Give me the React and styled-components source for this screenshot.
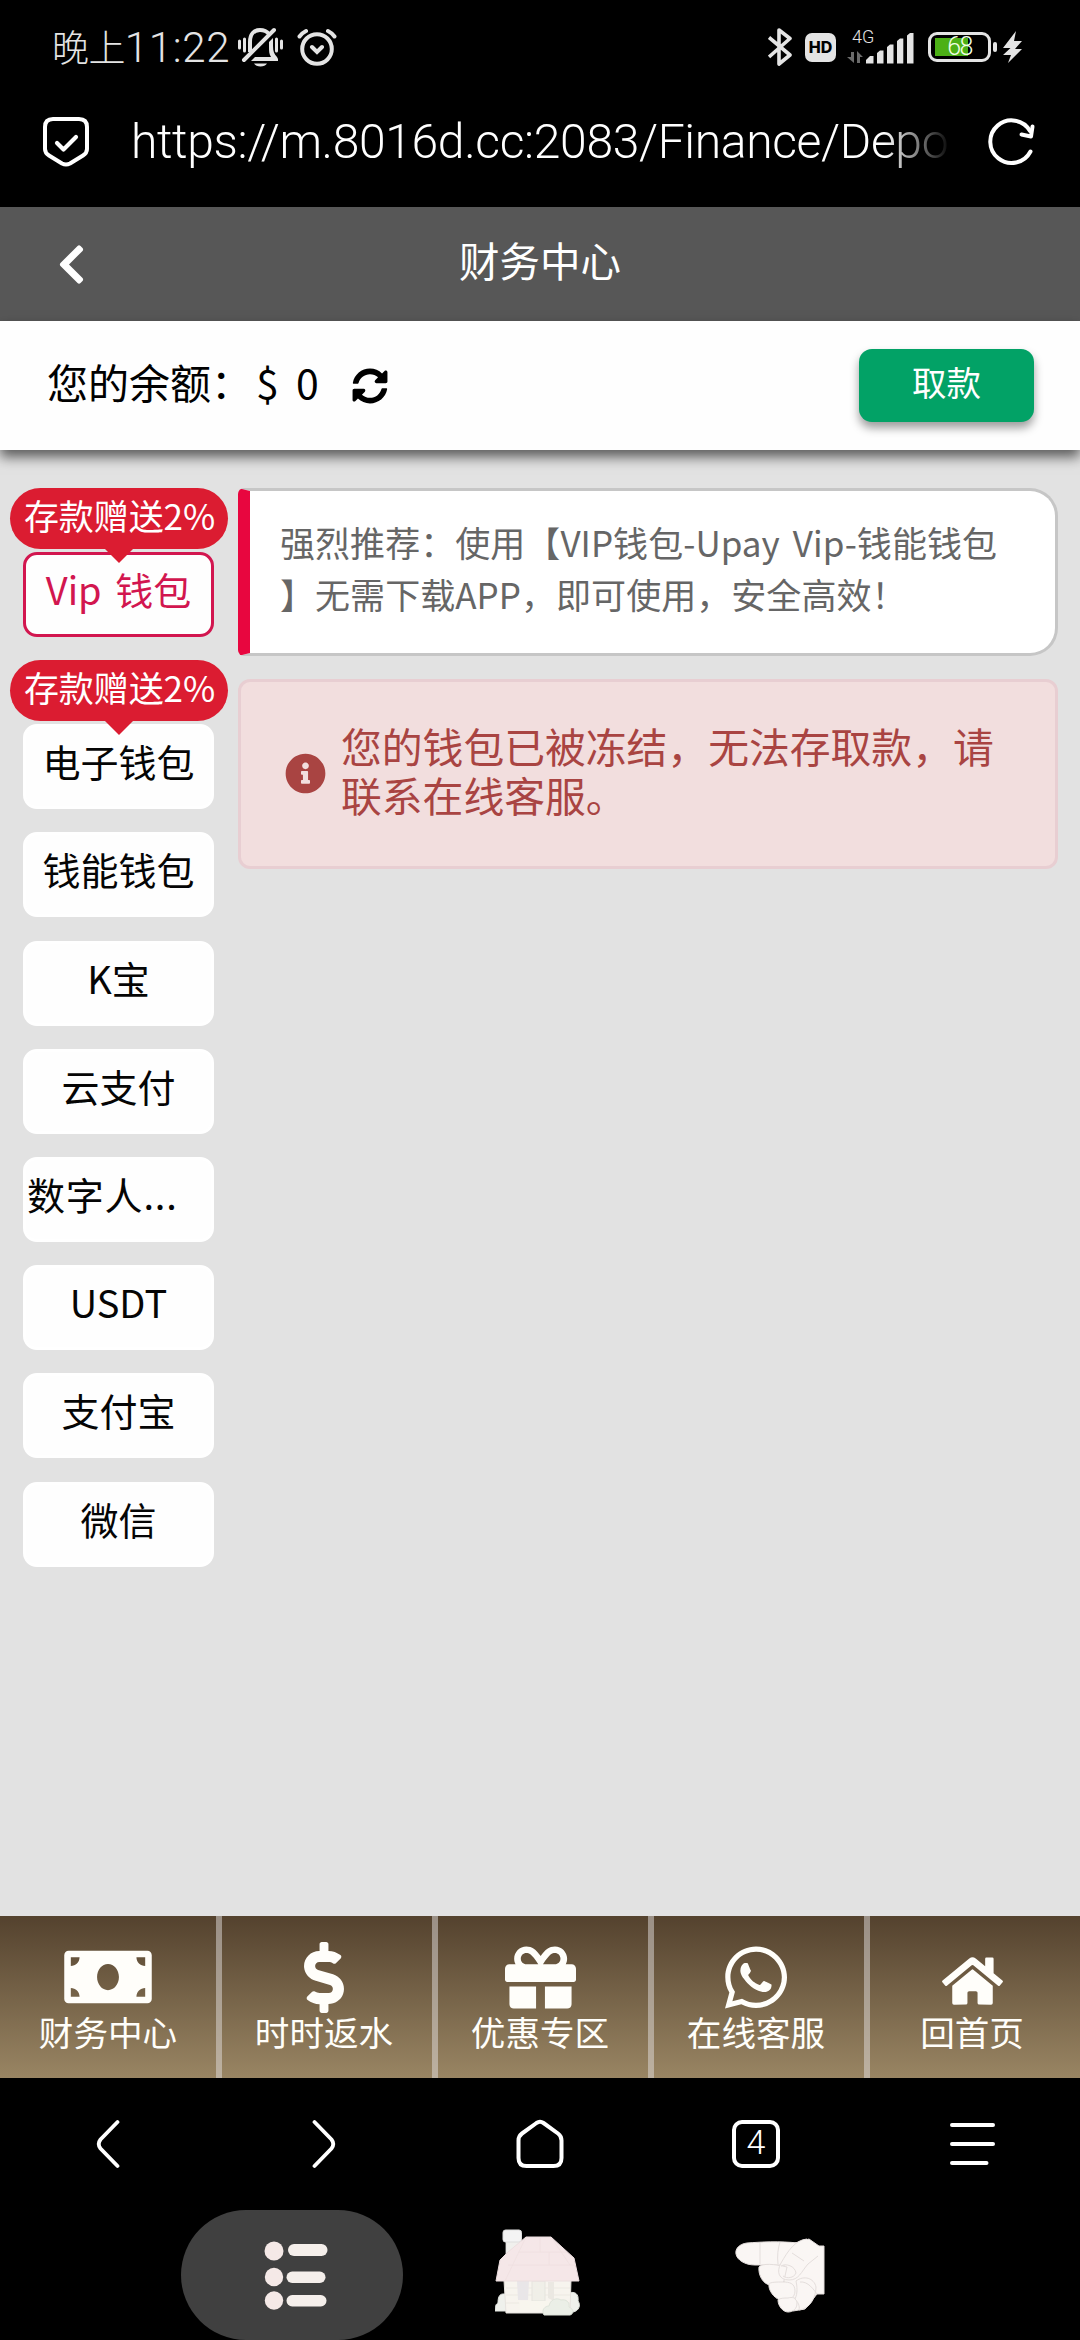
import React from "react";
import styled, { createGlobalStyle } from "styled-components";
import {
  FaChevronLeft,
  FaSyncAlt,
  FaInfoCircle,
  FaMoneyBill,
  FaDollarSign,
  FaGift,
  FaWhatsapp,
  FaHome,
} from "react-icons/fa";

const cjk = '"Noto Sans CJK SC", "Noto Sans", sans-serif';
const thin = 'Roboto, "Noto Sans CJK SC", sans-serif';

const GlobalStyle = createGlobalStyle`
  * { box-sizing: border-box; }
  html, body { margin: 0; padding: 0; background: #000; }
  body { width: 1080px; font-family: ${cjk}; }
  svg { display: block; flex: none; }
`;

const Screen = styled.div`
  display: flex;
  flex-direction: column;
  width: 1080px;
  height: 2340px;
  overflow: hidden;
  background: #000;
`;

/* ---------- phone status bar ---------- */
const StatusBar = styled.div`
  display: flex;
  justify-content: space-between;
  height: 94px;
  padding: 0 57px 0 52px;
  color: #e4e4e4;
`;

const StatusGroup = styled.div`
  display: flex;
  align-items: center;
  height: 94px;
`;

const Clock = styled.div`
  display: flex;
  align-items: baseline;
  width: 186px;
  white-space: nowrap;
  font-family: ${thin};
  font-weight: 300;
  line-height: 94px;
`;

const ClockPeriod = styled.span`
  font-family: ${cjk};
  font-weight: 300;
  font-size: 37px;
  letter-spacing: -0.6px;
`;

const ClockDigits = styled.span`
  font-size: 42px;
  letter-spacing: 0.7px;
`;

const HdBadge = styled.div`
  display: flex;
  align-items: center;
  justify-content: center;
  width: 31px;
  height: 29px;
  margin: 0 11px 0 13px;
  border-radius: 7px;
  background: #e4e4e4;
  color: #000;
  font-family: Inter, sans-serif;
  font-weight: 800;
  font-size: 16px;
  line-height: 29px;
`;

const Network = styled.div`
  display: flex;
  flex-direction: column;
  width: 67px;
  height: 34px;
`;

const NetworkType = styled.span`
  height: 14px;
  padding-left: 5px;
  font-family: ${thin};
  font-weight: 300;
  font-size: 18px;
  line-height: 14px;
`;

const SignalRow = styled.div`
  display: flex;
  height: 31px;
  margin-top: -11px;
`;

const Battery = styled.div`
  display: flex;
  align-items: center;
  justify-content: center;
  width: 63px;
  height: 30px;
  margin-left: 14px;
  border: 3px solid #e4e4e4;
  border-radius: 9px;
  background: linear-gradient(#4cb016, #4cb016) 4px 3px / 33px 18px no-repeat;
  font-family: ${thin};
  font-weight: 300;
  font-size: 25px;
  letter-spacing: -1.5px;
  line-height: 24px;
  color: #f2ffe6;
`;

const BatteryTip = styled.div`
  width: 4px;
  height: 10px;
  margin: 0 6px 0 2px;
  border-radius: 2px;
  background: #e4e4e4;
`;

/* ---------- browser address bar ---------- */
const AddressBar = styled.div`
  display: flex;
  align-items: center;
  height: 113px;
  padding: 0 43px 18px 42px;
`;

const Url = styled.div`
  width: 821px;
  margin: 0 37px 0 39px;
  padding-left: 2px;
  overflow: hidden;
  white-space: nowrap;
  color: #fff;
  font-family: ${thin};
  font-weight: 300;
  font-size: 48px;
  letter-spacing: -0.35px;
  line-height: 70px;
  mask-image: linear-gradient(90deg, #000 0 755px, transparent 822px);
`;

/* ---------- page ---------- */
const TitleBar = styled.header`
  display: grid;
  grid-template-columns: 120px 1fr 120px;
  align-items: center;
  height: 114px;
  padding-bottom: 2px;
  background: #575757;
  color: #fff;
`;

const BackButton = styled.div`
  padding: 3px 0 0 49px;
  font-size: 45px;
`;

const Title = styled.h1`
  margin: 0;
  text-align: center;
  font-weight: 400;
  font-size: 40.5px;
  line-height: 60px;
  padding-bottom: 6px;
`;

const BalanceBar = styled.div`
  display: flex;
  align-items: center;
  justify-content: space-between;
  height: 129px;
  padding: 0 46px 0 47px;
  background: #fefefe;
  box-shadow: 0 7px 12px rgba(0, 0, 0, 0.6);
  z-index: 1;
`;

const Balance = styled.div`
  display: flex;
  align-items: center;
  font-size: 41px;
  line-height: 60px;
  color: #000;
  white-space: pre;
`;

const BalanceText = styled.span`
  padding-bottom: 9px;
`;

const Amount = styled.span`
  padding-bottom: 9px;
  margin: 0 33px 0 4px;
  word-spacing: 8px;
`;

const WithdrawButton = styled.div`
  width: 175px;
  height: 73px;
  border-radius: 13px;
  background: #02a266;
  box-shadow: 0 6px 10px rgba(0, 0, 0, 0.38);
  color: #fff;
  text-align: center;
  font-size: 34.5px;
  line-height: 65px;
`;

const Content = styled.main`
  display: flex;
  align-items: flex-start;
  height: 1466px;
  padding: 38px 22px 0 10px;
  background: #e2e2e2;
`;

const Methods = styled.nav`
  display: flex;
  flex-direction: column;
  align-items: center;
  gap: 23.2px;
  width: 218px;
`;

const Method = styled.div`
  display: flex;
  flex-direction: column;
  align-items: center;
`;

const Promo = styled.div`
  position: relative;
  z-index: 1;
  width: 218px;
  height: 61px;
  margin-bottom: 3px;
  padding-left: 1px;
  border-radius: 31px;
  background: #db1c31;
  color: #fff;
  text-align: center;
  white-space: nowrap;
  font-size: 35px;
  letter-spacing: -0.1px;
  line-height: 54px;

  &::after {
    content: "";
    position: absolute;
    top: 60px;
    left: 94px;
    border: 15px solid transparent;
    border-top-color: #db1c31;
    border-bottom: 0;
  }
`;

const MethodButton = styled.div`
  width: 191px;
  height: 85px;
  margin-right: 1px;
  padding: 0 ${(p) => (p.$clipped ? "1px" : "0")};
  overflow: hidden;
  white-space: nowrap;
  border: 3px solid ${(p) => (p.$active ? "#d2164f" : "#fff")};
  border-radius: 14px;
  background: #fefefe;
  color: ${(p) => (p.$active ? "#d2164f" : "#050505")};
  text-align: ${(p) => (p.$clipped ? "left" : "center")};
  word-spacing: 5px;
  font-size: 38px;
  letter-spacing: ${(p) => (p.$clipped ? "0.8px" : "0")};
  line-height: 68px;
`;

const Panel = styled.section`
  display: flex;
  flex-direction: column;
  gap: 23px;
  width: 820px;
  margin-left: 10px;
`;

const Notice = styled.div`
  height: 168px;
  padding: 25px 0 0 30px;
  border: 3px solid #c6c6c6;
  border-left: 12px solid #e8063f;
  border-radius: 6px 28px 28px 6px;
  background: #fff;
  color: #666;
  font-size: 35px;
  line-height: 52px;
  white-space: nowrap;
`;

const NoticeLine = styled.div`
  word-spacing: 5px;
  letter-spacing: 0.05px;
`;

const Alert = styled.div`
  display: flex;
  align-items: center;
  gap: 15px;
  height: 190px;
  padding: 0 0 2px 44px;
  border: 3px solid #e8ced2;
  border-radius: 12px;
  background: #f2dede;
  color: #a94442;
  font-size: 40.8px;
  line-height: 48.6px;
  white-space: nowrap;
`;

const AlertText = styled.div`
  padding-bottom: 5px;
`;

/* ---------- site tab bar ---------- */
const TabBar = styled.nav`
  display: grid;
  grid-template-columns: repeat(5, 1fr);
  height: 162px;
  background: linear-gradient(#54422e, #998563);
`;

const Tab = styled.div`
  display: flex;
  flex-direction: column;
  align-items: center;
  padding-top: 26px;
  color: #fffefa;
  box-shadow: ${(p) => (p.$first ? "none" : "inset 6px 0 rgba(226, 222, 222, 0.5)")};
  font-size: 34.6px;
  line-height: 44px;
`;

const TabIcon = styled.div`
  display: flex;
  align-items: center;
  justify-content: center;
  height: 70px;
  margin-bottom: -3px;
  padding-top: ${(p) => p.$drop || 0}px;

  svg {
    width: ${(p) => p.$width}px;
    height: ${(p) => p.$height}px;
  }
`;

/* ---------- browser tool bar & system keys ---------- */
const BrowserBar = styled.div`
  display: grid;
  grid-template-columns: repeat(5, 1fr);
  justify-items: center;
  align-items: center;
  height: 132px;
`;

const TabCount = styled.div`
  width: 48px;
  height: 48px;
  border: 4px solid #fff;
  border-radius: 10px;
  color: #fff;
  text-align: center;
  font-family: ${thin};
  font-weight: 300;
  font-size: 34px;
  line-height: 37px;
`;

const SystemKeys = styled.div`
  display: flex;
  height: 130px;
  padding-left: 181px;
`;

const RecentsKey = styled.div`
  display: flex;
  align-items: center;
  width: 222px;
  padding-left: 82px;
  height: 130px;
  border-radius: 65px;
  background: #404040;
`;

const SystemKey = styled.div`
  margin: ${(p) => p.$top}px 0 0 ${(p) => p.$left}px;
`;

const AlarmSlot = styled.div`
  margin-left: 14px;
`;

const MutedBell = () => (
  <svg width="45" height="40" viewBox="0 0 45 40" fill="none" stroke="#e4e4e4">
    <path d="M1.5 14v7M6.5 12v12M43.5 14v7M38.5 12v12" stroke="#e4e4e4" strokeWidth="3" strokeLinecap="round" />
    <path d="M12 25V15C12 7 16 3 22 3c4 0 7 1.500 9 4" strokeWidth="4" />
    <path d="M35 11v8c0 5 1 8 4 11l1 2v2H13l4-4h16c-2-3-2-6-2-10v-5z" fill="#e4e4e4" stroke="none" />
    <path d="M6 33L36 3" strokeWidth="4" strokeLinecap="round" />
    <path d="M16 36.500h13c-2 4-11 4-13 0z" fill="#e4e4e4" stroke="none" />
  </svg>
);

const AlarmClock = () => (
  <svg width="40" height="38" viewBox="0 0 40 38" fill="none" stroke="#e4e4e4" strokeWidth="4" strokeLinecap="round">
    <circle cx="20" cy="21" r="14.800" />
    <path d="M2.500 8.500Q5 5 9 3M37.500 8.500Q35 5 31 3M15 19l5 5 5-5" />
  </svg>
);

const Bluetooth = () => (
  <svg width="24" height="40" viewBox="0 0 24 40" fill="none" stroke="#e4e4e4" strokeWidth="3.600" strokeLinejoin="round">
    <path d="M1 10.500L22 28 11 37V3l11 8.500L1 30" />
  </svg>
);

const Signal = () => (
  <svg width="67" height="31" viewBox="0 0 67 31" fill="#e4e4e4">
    <g fill="#6b6b6b">
      <path d="M4 19h3v11L0 24h4zM10 30V18l6 6h-3v6z" />
    </g>
    <path d="M19 30.500v-3.500l4-4h3.500v7.500zM30 30.500V20l3-2.500h3.500v13zM40 30.500V14l3-2.500h3.500v19zM50 30.500V8l3-2.500h3.300v25zM60 30.500V2.500L63 0h3.500v30.500z" />
  </svg>
);

const Bolt = () => (
  <svg width="20" height="32" viewBox="0 0 20 32" fill="#e4e4e4">
    <path d="M13 0L0 17h7.500L0 24h8L5 32 19 18h-7l7-8h-8z" />
  </svg>
);

const Shield = () => (
  <svg width="48" height="51" viewBox="0 0 48 51" fill="none" stroke="#fff" strokeWidth="4" strokeLinecap="round" strokeLinejoin="round">
    <path d="M11 3h26q8 0 8 8v22q0 4-4 6.500L28 47.500q-4 2-8 0L7 39.500Q3 37 3 33V11q0-8 8-8z" />
    <path d="M15 27l6.500 6.500L34 21" strokeWidth="4.200" />
  </svg>
);

const Reload = () => (
  <svg width="48" height="50" viewBox="0 0 48 50" fill="none" stroke="#fff" strokeWidth="4" strokeLinecap="round">
    <path d="M43.500 34.500A21.300 21.300 0 1 1 43 14" />
    <path d="M45.500 9.500L44 19.500 34.500 17.500" strokeLinejoin="round" />
  </svg>
);

const Arrow = ({ flip }) => (
  <svg width="24" height="50" viewBox="0 0 24 50" fill="none" stroke="#fff" strokeWidth="3.800" strokeLinecap="round" transform={flip ? "scale(-1,1)" : undefined}>
    <path d="M21.500 3L4.500 20.500Q1 25 4.500 29.500L21.500 47" />
  </svg>
);

const HomeOutline = () => (
  <svg width="48" height="50" viewBox="0 0 48 50" fill="none" stroke="#fff" strokeWidth="4" strokeLinejoin="round">
    <path d="M20.500 4q3.500-2.500 7 0L42 14.500q3.500 2.500 3.500 7V39q0 8-8 8h-27q-8 0-8-8V21.500q0-4.500 3.500-7z" />
  </svg>
);

const MenuLines = () => (
  <svg width="46" height="44" viewBox="0 0 46 44" stroke="#fff" strokeWidth="4" strokeLinecap="round">
    <path d="M3 3h41M3 22h41M3 41h34.500" />
  </svg>
);

const ListBlobs = () => (
  <svg width="66" height="72" viewBox="0 0 66 72" fill="#f5efeb">
    <g fill="#f5e9e7">
      <circle cx="11" cy="12" r="9.500" />
      <circle cx="11" cy="38" r="9.200" />
      <circle cx="11" cy="61.500" r="9.200" />
    </g>
    <rect x="25" y="5" width="39.500" height="12" rx="6" />
    <rect x="23.500" y="32.500" width="39" height="11.500" rx="5.700" />
    <rect x="23.500" y="56" width="40" height="11.500" rx="5.700" />
  </svg>
);

const Cottage = () => (
  <svg width="85" height="88" viewBox="0 0 85 88" strokeLinejoin="round">
    <path d="M11 10h14v22H11z" fill="#f0f0ed" stroke="#e2e2e2" strokeWidth="0.800" />
    <rect x="8" y="1" width="18.500" height="12" rx="2.500" fill="#f4f4f4" stroke="#dedede" />
    <path d="M0 82c0-5 1-7 3-8 0-5 1-9 5-9h5v17z" fill="#eff1ec" stroke="#e2e5e0" />
    <path d="M74 64c6-2 10 1 9 8 3 4 1 10-5 11h-8z" fill="#eff1ec" stroke="#e2e5e0" />
    <path d="M9 51h67l-1 33H11z" fill="#f7f4ee" stroke="#e6e3de" />
    <path d="M11 59h64M11 66h64M11 74h64" stroke="#ece9e2" />
    <path d="M22 52h12l-1 19H23z" fill="#e9e6e8" />
    <path d="M37 52h13v20H37z" fill="#f0efe8" stroke="#e5e4de" />
    <path d="M53 53v16l6 3V53z" fill="#ebe8e2" />
    <path d="M24 72h34l-4 9H25z" fill="#f8f6ee" />
    <path d="M1 52L5 31 13 23 31 8h25L79 29 84 52z" fill="#f5e7e8" stroke="#ecdedf" />
    <path d="M31 8L10 52M13 36h68M24 23h48M45 9v14M54 23v13M56 8l19 28" stroke="#efdfe0" strokeWidth="0.800" fill="none" />
    <path d="M49 86c-3-5 1-9 5-9 1-6 7-9 12-6 5-1 9 2 8 7 5 2 5 7 1 8z" fill="#ebefe7" stroke="#dfe4db" />
  </svg>
);

const PointingHand = () => (
  <svg width="90" height="75" viewBox="0 0 90 75" fill="#faf6f4" stroke="#e4dedc" strokeWidth="1" strokeLinejoin="round">
    <path d="M44 27L60 5l14-4 10 7h5v48h-7L70 71l-12 2z" />
    <path d="M12 5C4 6 0 11 1 16c1 6 9 11 19 11h30L63 5C45 3 25 4 12 5z" />
    <path d="M24 29c-1 8 4 17 11 18l13 0 4-18C40 26 27 25 24 29z" />
    <path d="M34 46c-1 6 5 14 11 16 7 1 15-1 15-9s-6-9-12-9-13 0-14 2z" />
    <path d="M43 62c0 6 5 12 10 12 5 0 9-3 9-9s-5-6-9-5c-4 0-8 0-10 2z" />
    <path d="M61 43c8-6 18-3 20 6 0 10-6 22-17 23 1-4-1-8-4-11 3-6 2-13 1-18z" />
    <path d="M72 1C60 2 53 13 46 25c-5 9-2 17 8 17 10 0 12-8 19-16M46 28c5-3 14 0 15 7-2 5-9 6-13 3M73 26l10-8M57 15l12 8" />
    <path d="M25 5v21M45 4c-2 6-3 14-2 22M82 56c-3-4-9-13-17-12" fill="none" />
  </svg>
);

const methods = [
  { label: "Vip 钱包", promo: "存款赠送2%", active: true },
  { label: "电子钱包", promo: "存款赠送2%" },
  { label: "钱能钱包" },
  { label: "K宝" },
  { label: "云支付" },
  { label: "数字人...", clipped: true },
  { label: "USDT" },
  { label: "支付宝" },
  { label: "微信" },
];

const tabs = [
  { label: "财务中心", Icon: FaMoneyBill, width: 88, height: 70 },
  { label: "时时返水", Icon: FaDollarSign, width: 40, height: 71 },
  { label: "优惠专区", Icon: FaGift, width: 71, height: 71 },
  { label: "在线客服", Icon: FaWhatsapp, width: 62, height: 71 },
  { label: "回首页", Icon: FaHome, width: 61, height: 54, drop: 8 },
];

export default function App() {
  return (
    <Screen>
      <GlobalStyle />
      <StatusBar>
        <StatusGroup>
          <Clock>
            <ClockPeriod>晚上</ClockPeriod>
            <ClockDigits>11:22</ClockDigits>
          </Clock>
          <MutedBell />
          <AlarmSlot>
            <AlarmClock />
          </AlarmSlot>
        </StatusGroup>
        <StatusGroup>
          <Bluetooth />
          <HdBadge>HD</HdBadge>
          <Network>
            <NetworkType>4G</NetworkType>
            <SignalRow>
              <Signal />
            </SignalRow>
          </Network>
          <Battery>68</Battery>
          <BatteryTip />
          <Bolt />
        </StatusGroup>
      </StatusBar>
      <AddressBar>
        <Shield />
        <Url>https://m.8016d.cc:2083/Finance/Depo</Url>
        <Reload />
      </AddressBar>

      <TitleBar>
        <BackButton>
          <FaChevronLeft />
        </BackButton>
        <Title>财务中心</Title>
      </TitleBar>
      <BalanceBar>
        <Balance>
          <BalanceText>您的余额：</BalanceText>
          <Amount>$ 0</Amount>
          <FaSyncAlt size={36} />
        </Balance>
        <WithdrawButton>取款</WithdrawButton>
      </BalanceBar>

      <Content>
        <Methods>
          {methods.map((m) => (
            <Method key={m.label}>
              {m.promo && <Promo>{m.promo}</Promo>}
              <MethodButton $active={m.active} $clipped={m.clipped}>
                {m.label}
              </MethodButton>
            </Method>
          ))}
        </Methods>
        <Panel>
          <Notice>
            <NoticeLine>强烈推荐：使用【VIP钱包-Upay Vip-钱能钱包</NoticeLine>
            <NoticeLine>】无需下载APP，即可使用，安全高效！</NoticeLine>
          </Notice>
          <Alert>
            <FaInfoCircle size={41} />
            <AlertText>
              您的钱包已被冻结，无法存取款，请
              <br />
              联系在线客服。
            </AlertText>
          </Alert>
        </Panel>
      </Content>

      <TabBar>
        {tabs.map(({ label, Icon, width, height, drop }, i) => (
          <Tab key={label} $first={i === 0}>
            <TabIcon $width={width} $height={height} $drop={drop}>
              <Icon />
            </TabIcon>
            {label}
          </Tab>
        ))}
      </TabBar>

      <BrowserBar>
        <Arrow />
        <Arrow flip />
        <HomeOutline />
        <TabCount>4</TabCount>
        <MenuLines />
      </BrowserBar>
      <SystemKeys>
        <RecentsKey>
          <ListBlobs />
        </RecentsKey>
        <SystemKey $top={19} $left={92}>
          <Cottage />
        </SystemKey>
        <SystemKey $top={28} $left={155}>
          <PointingHand />
        </SystemKey>
      </SystemKeys>
    </Screen>
  );
}
